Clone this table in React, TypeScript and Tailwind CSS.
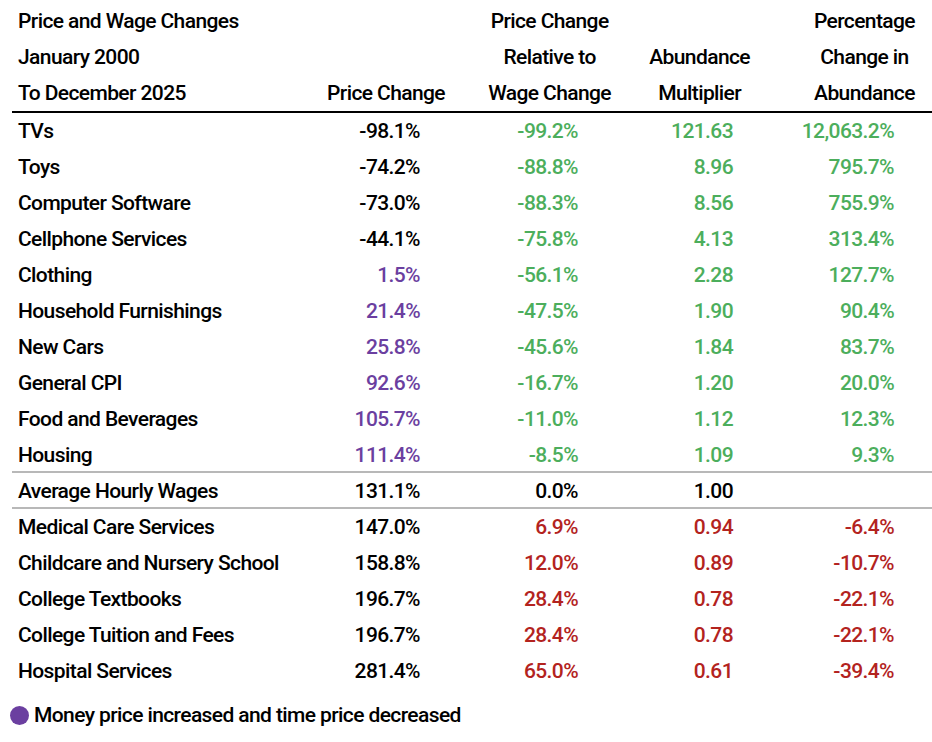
const GREEN = "text-[#4cae5c]";
const PURPLE = "text-[#6b3fa0]";
const RED = "text-[#b3231e]";

type Row = {
  name: string;
  price: string;
  priceColor?: string;
  rel: string;
  mult: string;
  pct: string;
  tone: "good" | "even" | "bad";
  divider?: boolean;
};

const rows: Row[] = [
  { name: "TVs", price: "-98.1%", rel: "-99.2%", mult: "121.63", pct: "12,063.2%", tone: "good" },
  { name: "Toys", price: "-74.2%", rel: "-88.8%", mult: "8.96", pct: "795.7%", tone: "good" },
  { name: "Computer Software", price: "-73.0%", rel: "-88.3%", mult: "8.56", pct: "755.9%", tone: "good" },
  { name: "Cellphone Services", price: "-44.1%", rel: "-75.8%", mult: "4.13", pct: "313.4%", tone: "good" },
  { name: "Clothing", price: "1.5%", priceColor: PURPLE, rel: "-56.1%", mult: "2.28", pct: "127.7%", tone: "good" },
  { name: "Household Furnishings", price: "21.4%", priceColor: PURPLE, rel: "-47.5%", mult: "1.90", pct: "90.4%", tone: "good" },
  { name: "New Cars", price: "25.8%", priceColor: PURPLE, rel: "-45.6%", mult: "1.84", pct: "83.7%", tone: "good" },
  { name: "General CPI", price: "92.6%", priceColor: PURPLE, rel: "-16.7%", mult: "1.20", pct: "20.0%", tone: "good" },
  { name: "Food and Beverages", price: "105.7%", priceColor: PURPLE, rel: "-11.0%", mult: "1.12", pct: "12.3%", tone: "good" },
  { name: "Housing", price: "111.4%", priceColor: PURPLE, rel: "-8.5%", mult: "1.09", pct: "9.3%", tone: "good", divider: true },
  { name: "Average Hourly Wages", price: "131.1%", rel: "0.0%", mult: "1.00", pct: "", tone: "even", divider: true },
  { name: "Medical Care Services", price: "147.0%", rel: "6.9%", mult: "0.94", pct: "-6.4%", tone: "bad" },
  { name: "Childcare and Nursery School", price: "158.8%", rel: "12.0%", mult: "0.89", pct: "-10.7%", tone: "bad" },
  { name: "College Textbooks", price: "196.7%", rel: "28.4%", mult: "0.78", pct: "-22.1%", tone: "bad" },
  { name: "College Tuition and Fees", price: "196.7%", rel: "28.4%", mult: "0.78", pct: "-22.1%", tone: "bad" },
  { name: "Hospital Services", price: "281.4%", rel: "65.0%", mult: "0.61", pct: "-39.4%", tone: "bad" },
];

const toneClass = (tone: Row["tone"]) =>
  tone === "good" ? GREEN : tone === "bad" ? RED : "text-black";

export default function App() {
  return (
    <div
      className="w-[932px] h-[742px] bg-white text-black text-[21px] font-medium leading-[36px] tracking-[-0.6px] pl-3"
      style={{ fontFamily: "Roboto, 'Liberation Sans', sans-serif" }}
    >
      {/* Header */}
      <div className="grid grid-cols-[288px_160px_166px_139px_167px] pt-[3px] border-b-2 border-black">
        <div className="pl-1.5">
          <div>Price and Wage Changes</div>
          <div>January 2000</div>
          <div>To December 2025</div>
        </div>
        <div className="flex flex-col justify-end items-end pr-[15px]">
          <div>Price Change</div>
        </div>
        <div className="flex flex-col justify-end items-end pr-[15px]">
          <div className="text-center">
            Price Change
            <br />
            Relative to
            <br />
            Wage Change
          </div>
        </div>
        <div className="flex flex-col justify-end items-end pr-[15px]">
          <div className="text-center">
            Abundance
            <br />
            Multiplier
          </div>
        </div>
        <div className="flex flex-col justify-end items-end pr-[17px]">
          <div className="text-center">
            Percentage
            <br />
            Change in
            <br />
            Abundance
          </div>
        </div>
      </div>

      {/* Body */}
      {rows.map((r) => (
        <div
          key={r.name}
          className={`grid grid-cols-[288px_160px_166px_139px_167px] h-9 ${
            r.divider ? "border-b-2 border-[#b8b8b8]" : ""
          }`}
        >
          <div className="pl-1.5">{r.name}</div>
          <div className={`text-right pr-[40px] ${r.priceColor ?? "text-black"}`}>{r.price}</div>
          <div className={`text-right pr-[48px] ${toneClass(r.tone)}`}>{r.rel}</div>
          <div className={`text-right pr-[32px] ${toneClass(r.tone)}`}>{r.mult}</div>
          <div className={`text-right pr-[38px] ${toneClass(r.tone)}`}>{r.pct}</div>
        </div>
      ))}

      {/* Legend */}
      <div className="flex items-center gap-[5px] -ml-[2px] mt-[8px]">
        <span className="w-[19px] h-[19px] rounded-full bg-[#6b3fa0]" />
        <span>Money price increased and time price decreased</span>
      </div>
    </div>
  );
}
